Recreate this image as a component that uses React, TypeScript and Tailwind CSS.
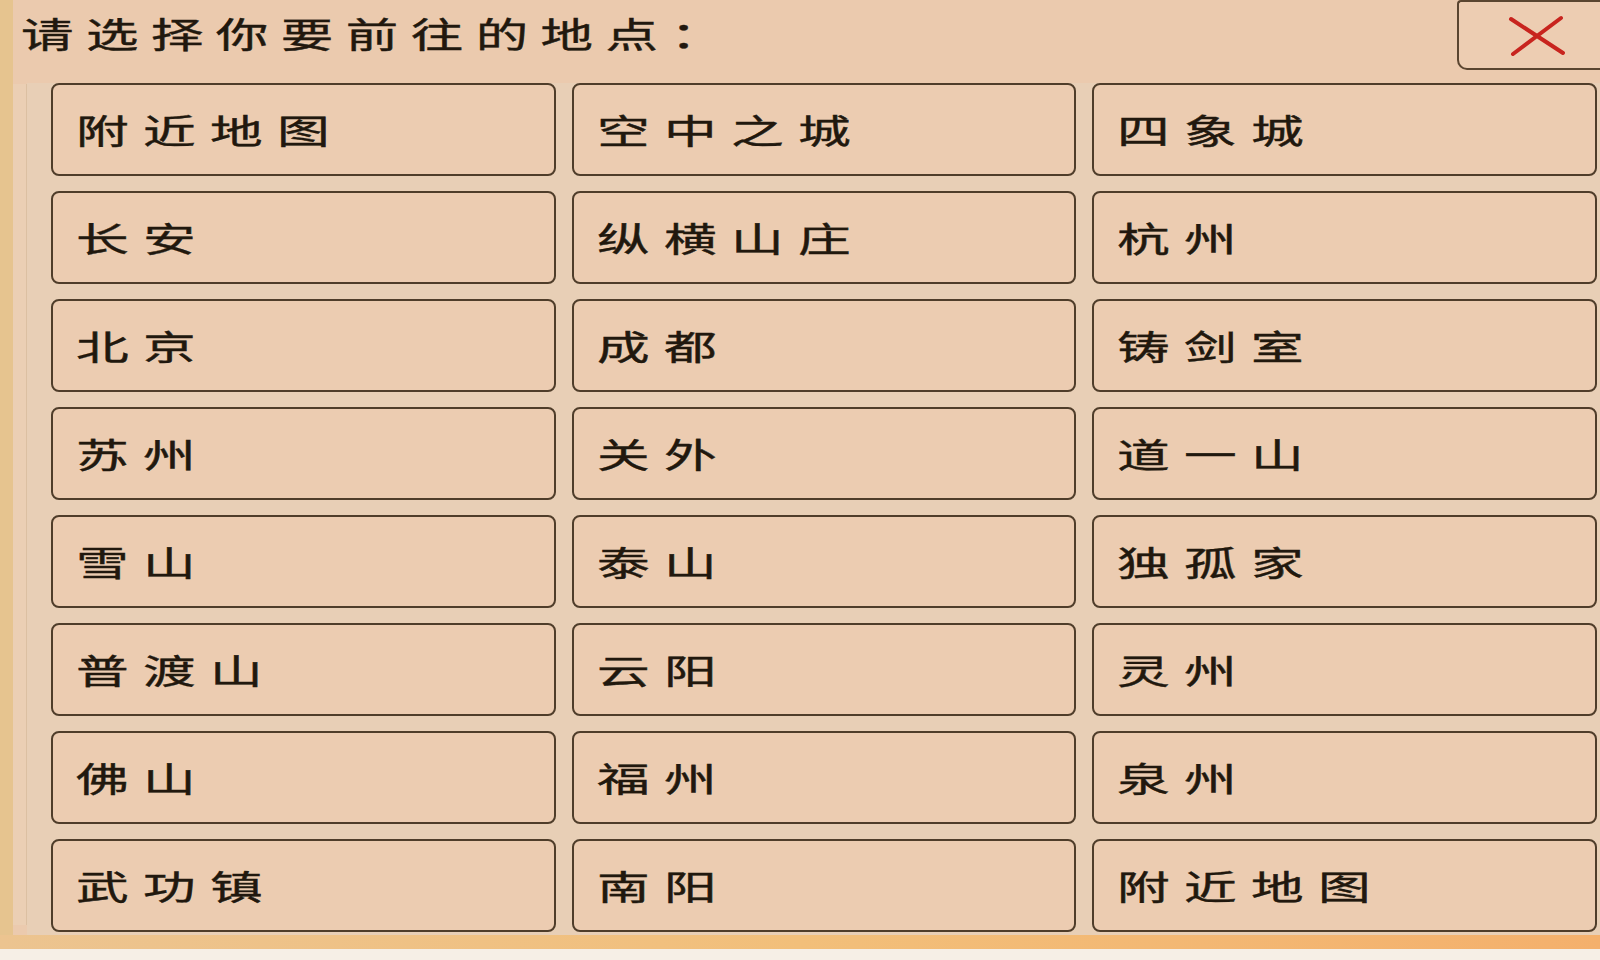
const places = [
  "附近地图", "空中之城", "四象城",
  "长安", "纵横山庄", "杭州",
  "北京", "成都", "铸剑室",
  "苏州", "关外", "道一山",
  "雪山", "泰山", "独孤家",
  "普渡山", "云阳", "灵州",
  "佛山", "福州", "泉州",
  "武功镇", "南阳", "附近地图",
]

const CloseIcon = () => (
  <svg width="60" height="42" viewBox="0 0 60 42" fill="none">
    <path d="M4 4 L56 38 M54 3 L6 39" stroke="#c8241e" strokeWidth="4" strokeLinecap="round" />
  </svg>
)

const App = () => {
  return (
    <main
      className="w-[1600px] h-[960px] flex flex-col bg-[#f6efe6] overflow-hidden"
      style={{ fontFamily: '"Noto Sans CJK SC", "Noto Sans", sans-serif' }}
    >
      <div className="h-[935px] flex bg-[#ebcaae]">
        <div className="w-[13px] bg-[#e6c48f]" />
        <div className="w-[14px] bg-[#ebcfb4] border-r border-[#dcc0a2] mt-[84px] mb-[10px]" />
        <section className="flex-1 flex flex-col">
          <header className="h-[83px] flex justify-between">
            <h1 className="pt-[11px] -ml-[6px] text-[35px] leading-[44px] text-[#21180e] font-normal tracking-[8.3px]">
              <span className="inline-block origin-left [transform:scaleX(1.5)] [-webkit-text-stroke:0.4px_#21180e]">请选择你要前往的地点：</span>
            </h1>
            <button
              type="button"
              className="w-[143px] h-[70px] flex items-center justify-center pl-[14px] pt-[2px] bg-[#edcdb2] border-[2.5px] border-r-0 border-[#5a4530] rounded-bl-[10px] rounded-tl-[4px]"
            >
              <CloseIcon />
            </button>
          </header>
          <div className="grid grid-cols-3 grid-rows-8 gap-x-[16px] gap-y-[15px] pl-[24px] pr-[3px] bg-[#e8cfb6] pb-[3px]">
            {places.map((p, i) => (
              <div
                key={i}
                className="h-[93px] flex items-center pl-[23px] bg-[#ecccb1] border-[2.5px] border-[#4f3d2a] rounded-[8px]"
              >
                <span className="inline-block origin-left [transform:scaleX(1.55)] [-webkit-text-stroke:0.4px_#21180e] text-[34px] leading-none text-[#21180e] font-normal tracking-[9.2px]">
                  {p}
                </span>
              </div>
            ))}
          </div>
        </section>
      </div>
      <div className="h-[14px] bg-gradient-to-r from-[#ecc490] via-[#f2bf7a] to-[#f4b06c]" />
    </main>
  )
}

export default App
